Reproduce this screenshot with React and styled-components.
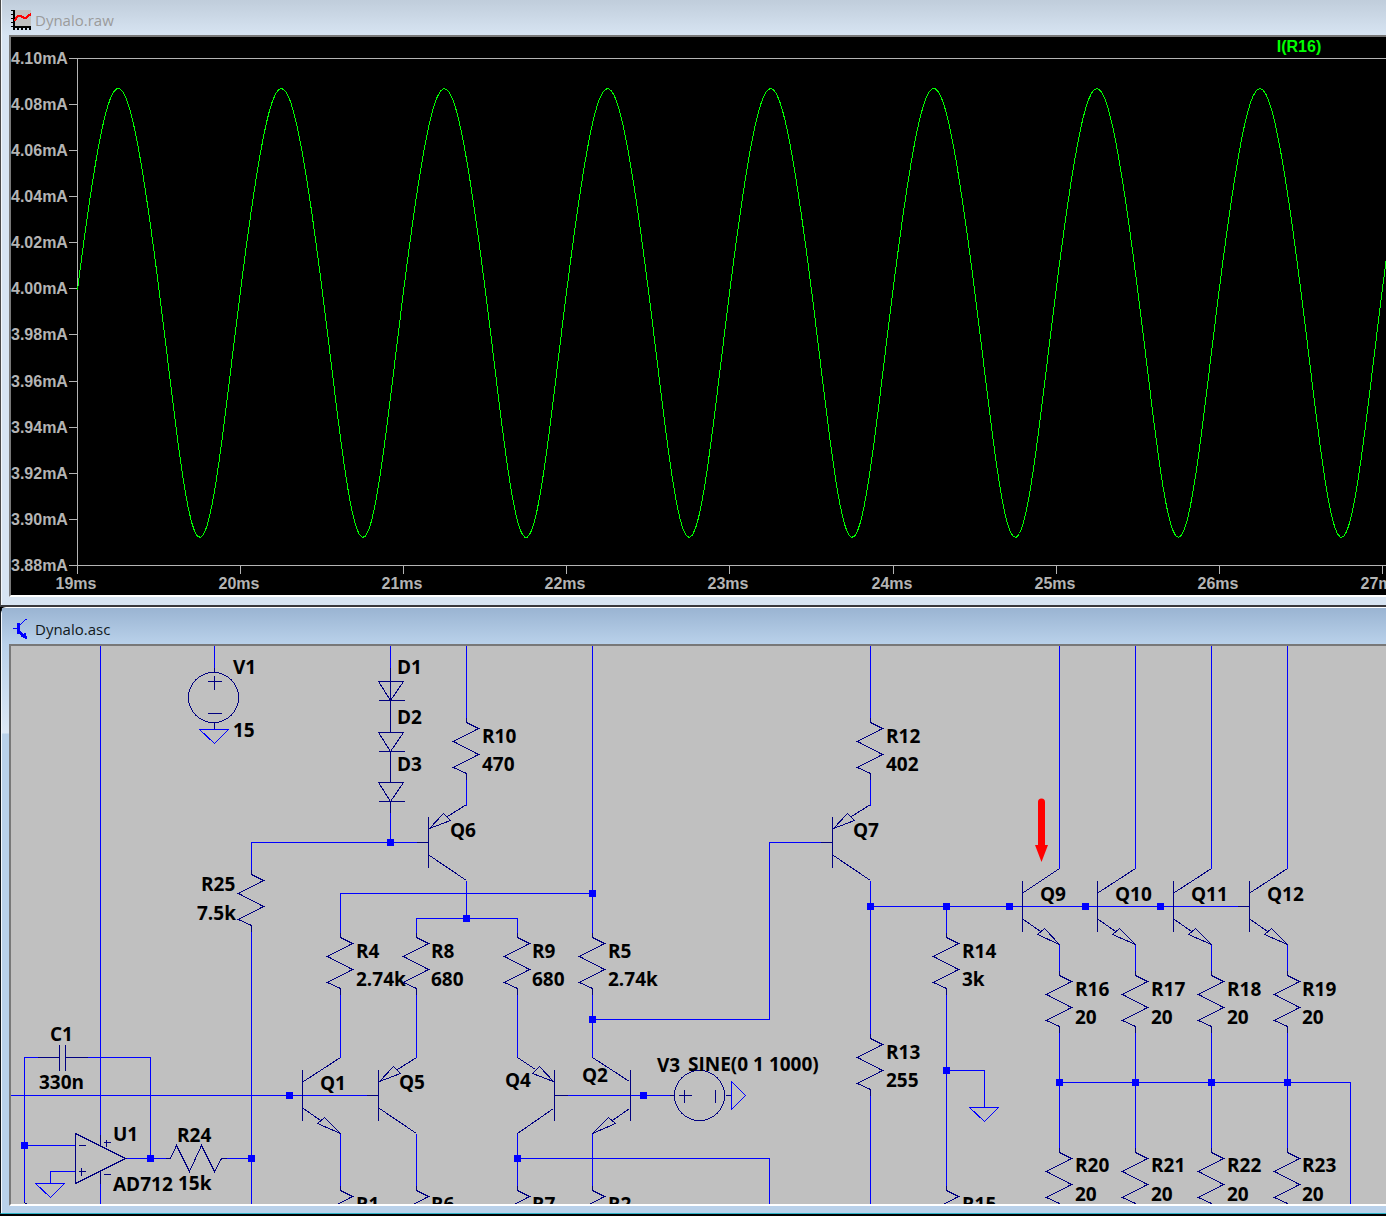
import React from 'react';
import styled, { createGlobalStyle } from 'styled-components';

const GlobalStyle = createGlobalStyle`
  * {
    box-sizing: border-box;
  }
  body {
    margin: 0;
    background: #000;
  }
`;

const Desktop = styled.main`
  display: flex;
  flex-direction: column;
  width: 100%;
  height: 100vh;
  overflow: hidden;
  padding-bottom: 2px;
`;

const Window = styled.section`
  display: flex;
  flex-direction: column;
  flex: ${({ $grow }) => ($grow ? '1 1 0' : 'none')};
  min-height: 0;
  padding: 0 0 ${({ $active }) => ($active ? '7px' : '8px')} 8px;
  border-left: 1px solid ${({ $active }) => ($active ? '#10161c' : '#4a4a4a')};
  border-bottom: ${({ $active }) => ($active ? '1px solid #2fb4c8' : '2px solid #38383c')};
  border-top: ${({ $active }) => ($active ? '1px solid #fff' : 'none')};
  border-top-left-radius: ${({ $active }) => ($active ? '6px' : '0')};
  background: ${({ $active }) =>
    $active
      ? 'linear-gradient(#9ab4d2, #b9d1ea 36px, #dce8f5 125px, #b9d1ea 126px)'
      : '#d7e4f2'};
  box-shadow: inset 1px 0 0 #f4f8fc;
`;

const TitleBar = styled.header`
  display: flex;
  align-items: center;
  gap: 4px;
  flex: none;
  height: ${({ $active }) => ($active ? '36px' : '35px')};
  margin-left: -7px;
  padding: ${({ $active }) => ($active ? '6px' : '4px')} 0 0 9px;
  background: ${({ $active }) =>
    $active ? 'linear-gradient(#9ab4d2, #b9d1ea)' : 'linear-gradient(#c0cddb, #d7e4f2)'};
`;

const Title = styled.h1`
  margin: 0;
  font: 400 15px/20px 'Open Sans', 'Noto Sans', sans-serif;
  color: ${({ $active }) => ($active ? '#101820' : '#9b9b9b')};
`;

const Pane = styled.div`
  display: flex;
  flex: ${({ $grow }) => ($grow ? '1 1 0' : 'none')};
  height: ${({ $height }) => $height || 'auto'};
  min-height: 0;
  overflow: hidden;
  background: ${({ $color }) => $color};
  border-style: solid;
  border-width: 2px 0 2px 2px;
  border-color: #787878 #fff #fff #787878;
`;

const Drawing = styled.svg`
  display: block;
  flex: 1;
  min-width: 0;
  height: 100%;
  shape-rendering: crispEdges;
`;

const AxisText = styled.text`
  font: 700 16px 'Liberation Sans', Arial, sans-serif;
  fill: ${({ $trace }) => ($trace ? '#00ff00' : '#b4b4b4')};
`;

const Label = styled.text`
  font: 700 19px 'Open Sans', 'Noto Sans', sans-serif;
  fill: #000;
`;

const Wire = styled.path`
  fill: none;
  stroke: #0000ff;
`;

const Symbol = styled.path`
  fill: none;
  stroke: #000080;
`;

const Icon = styled.svg`
  flex: none;
  width: 20px;
  height: 20px;
  shape-rendering: crispEdges;
`;

/* ---------- waveform ---------- */

const AXIS_X = 66;
const AXIS_TOP = 21;
const AXIS_BOTTOM = 528;
const MS = 163.1;
const STEP = 46.08;

const levels = ['4.10', '4.08', '4.06', '4.04', '4.02', '4.00', '3.98', '3.96', '3.94', '3.92', '3.90', '3.88'];
const times = [19, 20, 21, 22, 23, 24, 25, 26, 27];

const currentAt = (x) => {
  const t = ((x - AXIS_X) / MS) * 2 * Math.PI;
  return 264 - 219.5 * Math.sin(t) + 5 * Math.sin(3 * t) - 11.5 * Math.cos(2 * t);
};

const trace = () => {
  const points = [];
  for (let x = AXIS_X; x < AXIS_X + MS * 8.5; x += 3) {
    points.push(`${x},${currentAt(x).toFixed(1)}`);
  }
  return points.join(' ');
};

const Waveform = () => (
  <Drawing role="img" aria-label="I(R16)">
    <g transform="translate(0.5 0.5)" fill="none" stroke="#b4b4b4">
      <line x1={AXIS_X} y1={AXIS_TOP} x2="100%" y2={AXIS_TOP} />
      <line x1={AXIS_X} y1={AXIS_BOTTOM} x2="100%" y2={AXIS_BOTTOM} />
      <line x1={AXIS_X} y1={AXIS_TOP} x2={AXIS_X} y2={AXIS_BOTTOM + 8} />
      {levels.map((level, i) => {
        const y = Math.round(AXIS_TOP + i * STEP);
        return <line key={level} x1={AXIS_X - 9} y1={y} x2={AXIS_X} y2={y} />;
      })}
      {times.map((ms, i) => {
        const x = Math.round(AXIS_X + i * MS);
        return <line key={ms} x1={x} y1={AXIS_BOTTOM} x2={x} y2={AXIS_BOTTOM + 8} />;
      })}
      <polyline points={trace()} stroke="#00ff00" />
    </g>
    {levels.map((level, i) => (
      <AxisText key={level} x="0" y={Math.round(AXIS_TOP + 6 + i * STEP)}>
        {level}mA
      </AxisText>
    ))}
    {times.map((ms, i) => (
      <AxisText key={ms} x={Math.round(AXIS_X - 1 + i * MS)} y={AXIS_BOTTOM + 24} textAnchor="middle">
        {ms}ms
      </AxisText>
    ))}
    <AxisText $trace x="1288" y="15" textAnchor="middle">
      I(R16)
    </AxisText>
  </Drawing>
);

/* ---------- schematic ---------- */

const Resistor = ({ x, y }) => (
  <Symbol d={`M${x} ${y - 5}v5l12 6l-25 13l25 13l-25 13l13 6v6`} />
);

// "flip" mirrors the part to the left, "pnp" puts the arrow on the upper leg
const Transistor = ({ x, y, pnp, flip, reach = 38 }) => {
  const px = (n) => (flip ? x - n : x + n);
  const at = (dx, dy) => `${px(dx)} ${y + dy}`;
  return (
    <>
      <Symbol d={`M${x} ${y - 26}V${y + 25}`} />
      {pnp ? (
        <Symbol
          d={`M${at(19, -26)}L${at(reach, -38)}M${at(1, -14)}L${at(15, -29)}L${at(22, -22)}ZM${at(1, 13)}L${at(reach, 38)}`}
        />
      ) : (
        <Symbol
          d={`M${at(1, -14)}L${at(reach, -38)}M${at(1, 13)}L${at(18, 25)}M${at(reach, 38)}L${at(22, 22)}L${at(15, 28)}Z`}
        />
      )}
    </>
  );
};

const Diode = ({ y }) => <Symbol d={`M378 ${y}h25l-13 19zM378 ${y + 19}h26`} />;

const Ground = ({ x, y }) => <Wire d={`M${x - 15} ${y}h29l-14 14z`} />;

const Node = ({ x, y }) => <rect x={x - 3} y={y - 3} width="7" height="7" fill="#0000ff" />;

const outputColumns = [1059, 1135, 1211, 1287];

const wires = [
  'M100 640V1134M100 1183V1210',
  'M214 640V667',
  'M390 640V667M390 812V842',
  'M466 640V717M466 778V805M466 880V918',
  'M592 640V932M592 992V1057M592 1133V1185',
  'M870 640V717M870 778V805M870 880V1033M870 1093V1210',
  'M251 869V842H416M251 929V1210',
  'M340 932V893H592M340 992V1057M340 1133V1185',
  'M416 932V918H517V932M416 992V1057M416 1133V1185',
  'M517 992V1057M517 1133V1185M517 1158H769V1210',
  'M592 1019H769V842H820',
  'M567 1095H669',
  'M10 1095H366',
  'M37 1057H24V1202M87 1057H150V1158M24 1145H75',
  'M75 1171H50V1183M126 1158H165M226 1158H251',
  'M870 906H1237M946 906V932M946 992V1185M946 1070H984V1107',
  'M1059 1082H1350V1210',
];

const leads = [
  'M390 667V732M390 751V782M390 801V812',
  'M416 842H428M820 842H832M366 1095H378M554 1095H567M669 1095H674M1237 906H1249',
  'M37 1057H59M65 1057H87M59 1044V1070M65 1044V1070',
  'M100 1134V1145M100 1171V1183M24 1202l4 3',
  'M165 1158H170l6 -13l13 26l12 -26l13 26l7 -13h5',
  'M75 1133V1183L125 1158Z',
  'M78 1145H85M78 1171H85M81 1167V1175M103 1142H110M106 1139V1146M103 1174H110',
  'M214 667V672M214 722V729M207 681H221M214 675V689M207 713H221',
  'M678 1095H691M684 1089V1102M715 1089V1102M725 1095H731',
];

const nodes = [
  [390, 842], [466, 918], [592, 893], [592, 1019], [289, 1095], [24, 1145],
  [150, 1158], [251, 1158], [517, 1158], [643, 1095], [870, 906], [946, 906],
  [1009, 906], [1085, 906], [1160, 906], [946, 1070],
  [1059, 1082], [1135, 1082], [1211, 1082], [1287, 1082],
];

const resistors = [
  [466, 722], [870, 722], [251, 874], [340, 937], [416, 937], [517, 937],
  [592, 937], [946, 937], [870, 1038], [340, 1190], [416, 1190], [517, 1190],
  [592, 1190], [946, 1190],
];

const labels = [
  [233, 674, 'V1'], [233, 737, '15'],
  [397, 674, 'D1'], [397, 724, 'D2'], [397, 771, 'D3'],
  [482, 743, 'R10'], [482, 771, '470'], [450, 837, 'Q6'],
  [201, 891, 'R25'], [197, 920, '7.5k'],
  [356, 958, 'R4'], [356, 986, '2.74k'],
  [431, 958, 'R8'], [431, 986, '680'],
  [532, 958, 'R9'], [532, 986, '680'],
  [608, 958, 'R5'], [608, 986, '2.74k'],
  [886, 743, 'R12'], [886, 771, '402'], [853, 837, 'Q7'],
  [962, 958, 'R14'], [962, 986, '3k'],
  [886, 1059, 'R13'], [886, 1087, '255'],
  [1040, 901, 'Q9'], [1115, 901, 'Q10'], [1191, 901, 'Q11'], [1267, 901, 'Q12'],
  [1075, 996, 'R16'], [1151, 996, 'R17'], [1227, 996, 'R18'], [1302, 996, 'R19'],
  [1075, 1172, 'R20'], [1151, 1172, 'R21'], [1227, 1172, 'R22'], [1302, 1172, 'R23'],
  [1075, 1024, '20'], [1151, 1024, '20'], [1227, 1024, '20'], [1302, 1024, '20'],
  [1075, 1201, '20'], [1151, 1201, '20'], [1227, 1201, '20'], [1302, 1201, '20'],
  [320, 1090, 'Q1'], [399, 1089, 'Q5'], [505, 1087, 'Q4'], [582, 1082, 'Q2'],
  [657, 1072, 'V3'], [688, 1071, 'SINE(0 1 1000)'],
  [50, 1041, 'C1'], [39, 1089, '330n'],
  [113, 1141, 'U1'], [113, 1191, 'AD712'],
  [177, 1142, 'R24'], [178, 1190, '15k'],
  [356, 1211, 'R1'], [431, 1211, 'R6'], [532, 1211, 'R7'], [608, 1211, 'R2'],
  [962, 1211, 'R15'],
];

const Schematic = () => (
  <Drawing role="img" aria-label="Dynalo schematic">
    {/* the sheet is scrolled down and to the right */}
    <g transform="translate(-10.5 -645.5)">
      {wires.map((d) => (
        <Wire key={d} d={d} />
      ))}
      {outputColumns.map((x) => (
        <Wire key={x} d={`M${x} 640V868M${x} 944V970M${x} 1030V1147`} />
      ))}
      {leads.map((d) => (
        <Symbol key={d} d={d} />
      ))}
      {resistors.map(([x, y]) => (
        <Resistor key={`${x}-${y}`} x={x} y={y} />
      ))}
      {outputColumns.map((x) => (
        <React.Fragment key={x}>
          <Resistor x={x} y={975} />
          <Resistor x={x} y={1152} />
        </React.Fragment>
      ))}

      <circle cx="213" cy="697" r="25" fill="none" stroke="#000080" />
      <circle cx="699" cy="1095" r="25" fill="none" stroke="#000080" />
      <Diode y={681} />
      <Diode y={732} />
      <Diode y={782} />

      <Transistor x={428} y={842} pnp />
      <Transistor x={832} y={842} pnp />
      <Transistor x={302} y={1095} />
      <Transistor x={378} y={1095} pnp />
      <Transistor x={554} y={1095} pnp flip reach={37} />
      <Transistor x={630} y={1095} flip />
      <Transistor x={1022} y={906} reach={37} />
      <Transistor x={1097} y={906} />
      <Transistor x={1173} y={906} />
      <Transistor x={1249} y={906} />

      <Ground x={214} y={729} />
      <Ground x={50} y={1183} />
      <Ground x={984} y={1107} />
      <Wire d="M731 1081V1109L745 1095Z" />
    </g>
    <g transform="translate(-11 -646)">
      {nodes.map(([x, y]) => (
        <Node key={`${x}-${y}`} x={x} y={y} />
      ))}
      {labels.map(([x, y, text]) => (
        <Label key={`${x}-${y}`} x={x} y={y}>
          {text}
        </Label>
      ))}
      <path
        d="M1038 845V802a3.5 3.5 0 0 1 7 0V845h3l-6.500 17l-6.500 -17z"
        fill="#ff0000"
        shapeRendering="auto"
      />
    </g>
  </Drawing>
);

/* ---------- windows ---------- */

const PlotIcon = () => (
  <Icon viewBox="0 0 20 20" aria-hidden="true">
    <rect x="4" width="16" height="16" fill="#c0c0c0" />
    <path d="M2 0h2v16h16v2H2z" fill="#000" />
    <path d="M1 0V18" fill="none" stroke="#000" strokeWidth="2" strokeDasharray="1 3" />
    <path d="M2 18.500H20" fill="none" stroke="#000" strokeWidth="3" strokeDasharray="2 2" />
    <path d="M4 11L5 8L7 6H10L13 8H15L17 6L20 4" fill="none" stroke="#ff0000" strokeWidth="2" />
  </Icon>
);

const TransistorIcon = () => (
  <Icon viewBox="0 0 20 20" aria-hidden="true">
    <path d="M6 4h3v11h-3zM2 9h4v1h-4z" fill="#0000ff" />
    <path d="M9 6h1v-1h1v-1h1v-1h1v-1h1v-1h2v-1h-2v1h-1v1h-1v1h-1v1h-1v1h-1z" fill="#0000ff" />
    <path d="M9 12h1v1h1v1h1v1h1v-1h2v3h1v3h-2v-1h-2v-1h-2v-2h-1v-1h-1z" fill="#0000ff" />
  </Icon>
);

const App = () => (
  <>
    <GlobalStyle />
    <Desktop>
      <Window>
        <TitleBar>
          <PlotIcon />
          <Title>Dynalo.raw</Title>
        </TitleBar>
        <Pane $color="#000" $height="562px">
          <Waveform />
        </Pane>
      </Window>
      <Window $active $grow>
        <TitleBar $active>
          <TransistorIcon />
          <Title $active>Dynalo.asc</Title>
        </TitleBar>
        <Pane $color="#c0c0c0" $grow>
          <Schematic />
        </Pane>
      </Window>
    </Desktop>
  </>
);

export default App;
